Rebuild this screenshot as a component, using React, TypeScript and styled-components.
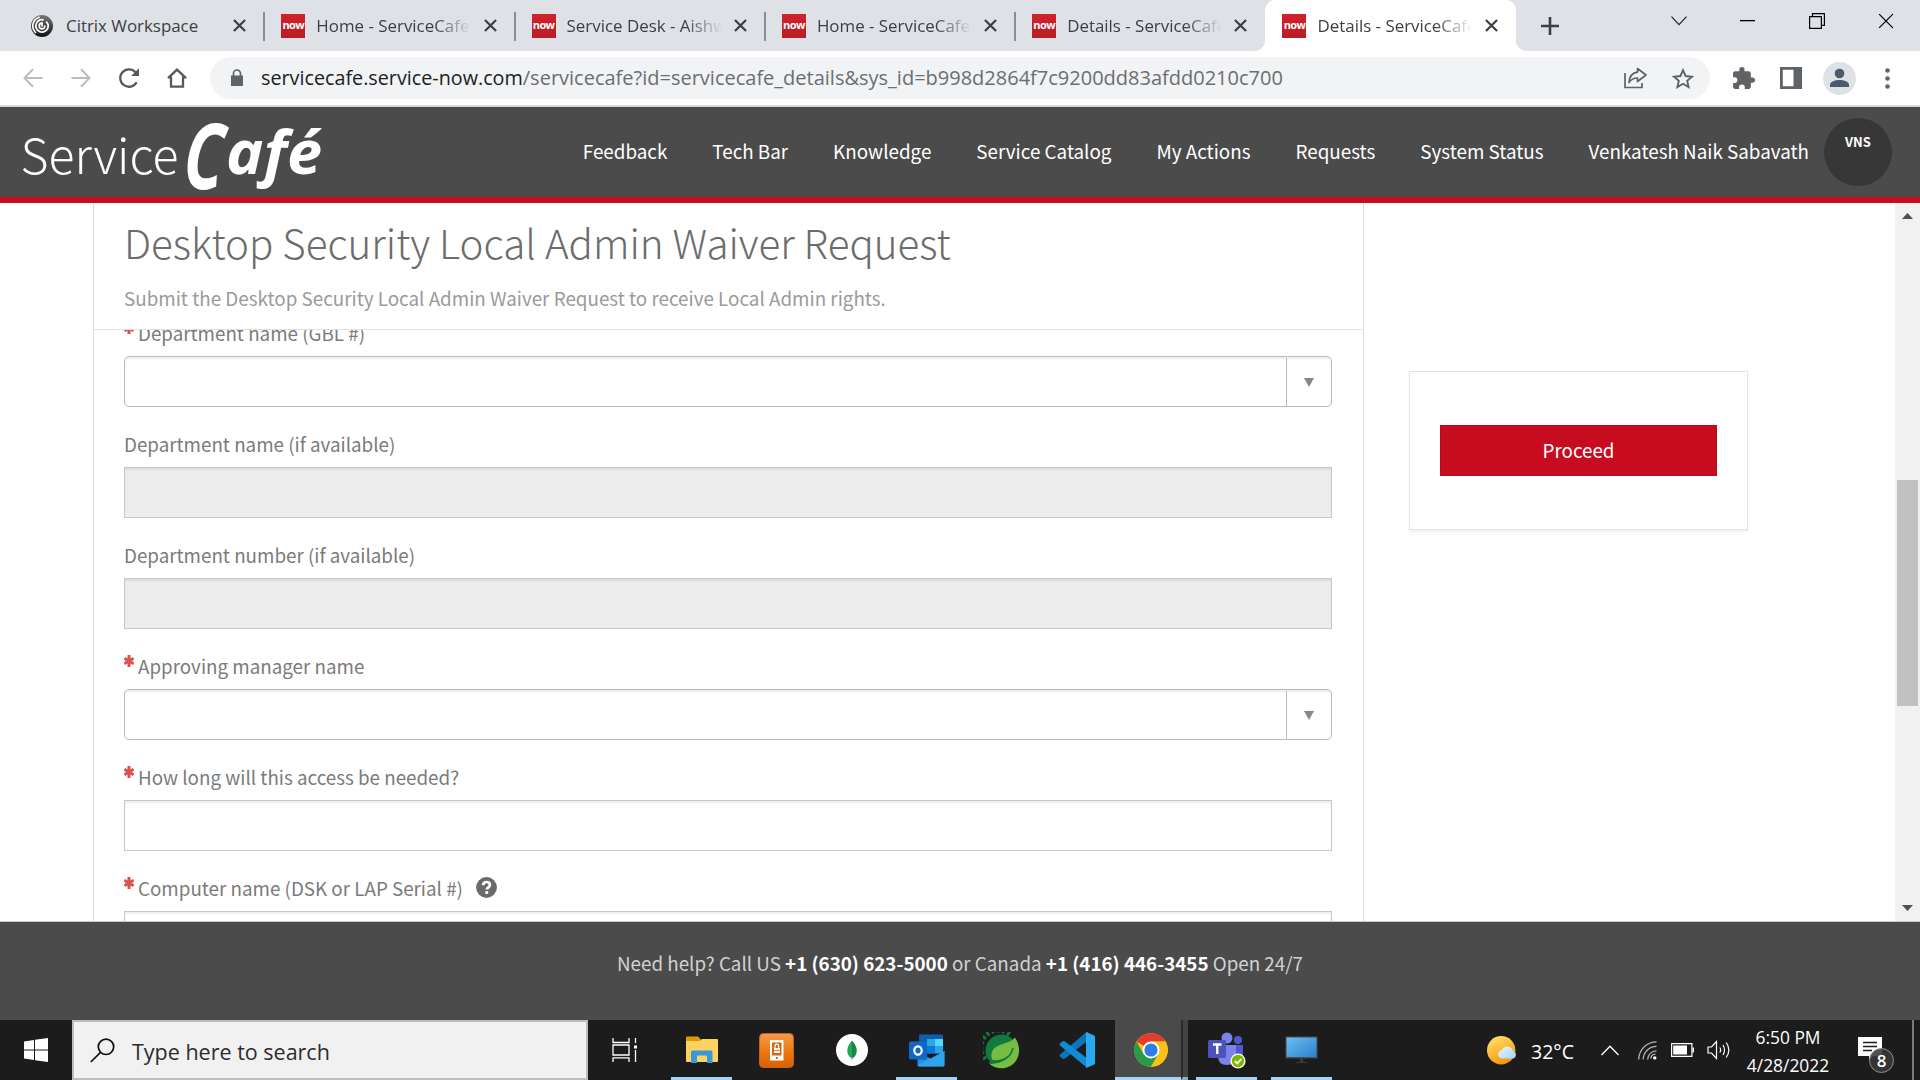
import React from 'react';
import styled, { createGlobalStyle, css } from 'styled-components';

const source = '"Noto Sans CJK SC", "Noto Sans", sans-serif';
const segoe = '"Open Sans", "Noto Sans", sans-serif';

const GlobalStyle = createGlobalStyle`
  * { box-sizing: border-box; }
  html, body { margin: 0; padding: 0; background: #fff; overflow: hidden; }
  svg { display: block; flex: none; }
`;

const Screen = styled.div`
  width: 1920px;
  height: 1080px;
  display: flex;
  flex-direction: column;
  overflow: hidden;
  background: #fff;
`;

/* ---------- browser chrome ---------- */

const TabStrip = styled.div`
  height: 51px;
  flex: none;
  display: flex;
  padding-left: 14px;
  background: #dee1e6;
  font-family: ${segoe};
`;

const TabBox = styled.div<{ $active?: boolean; $last?: boolean }>`
  width: 250.3px;
  height: 51px;
  display: flex;
  align-items: center;
  position: relative;
  padding: 0 18px 0 17px;
  gap: 11px;
  color: #3c4043;
  ${p => p.$active
    ? css`
        background: #fff;
        border-radius: 10px 10px 0 0;
        &::before, &::after {
          content: '';
          position: absolute;
          bottom: 0;
          width: 10px;
          height: 10px;
        }
        &::before { left: -10px; background: radial-gradient(circle at 0 0, #dee1e6 9.5px, #fff 10px); }
        &::after { right: -10px; background: radial-gradient(circle at 100% 0, #dee1e6 9.5px, #fff 10px); }
      `
    : !p.$last && css`
        &::after {
          content: '';
          position: absolute;
          right: -1px;
          top: 12px;
          width: 2px;
          height: 29px;
          background: #8c8e92;
        }
      `}
`;

const TabTitle = styled.div<{ $fade?: boolean }>`
  flex: 1;
  width: 0;
  overflow: hidden;
  white-space: nowrap;
  font-size: 16.9px;
  line-height: 50px;
  ${p => p.$fade && css`mask-image: linear-gradient(90deg, #000 118px, transparent 155px);`}
`;

const NowIcon = styled.div`
  width: 24px;
  height: 24px;
  flex: none;
  background: linear-gradient(#d0222c, #b81d26);
  color: #fff;
  font: 700 11px/21px ${segoe};
  letter-spacing: -0.6px;
  text-align: center;
  overflow: hidden;
`;

const NewTab = styled.div`
  width: 68px;
  display: flex;
  align-items: center;
  justify-content: center;
`;

const WindowButtons = styled.div`
  margin-left: auto;
  display: flex;
  height: 42px;
`;

const WindowButton = styled.div`
  width: 69px;
  display: flex;
  align-items: center;
  justify-content: center;
`;

const Toolbar = styled.div`
  height: 56px;
  flex: none;
  display: flex;
  align-items: center;
  padding-left: 9px;
  background: #fff;
  border-bottom: 2px solid #d8d8da;
`;

const Slot = styled.div`
  width: 48px;
  height: 42px;
  flex: none;
  display: flex;
  align-items: center;
  justify-content: center;
`;

const Omnibox = styled.div`
  width: 1500px;
  height: 42px;
  margin: 0 9px;
  padding: 0 3px 0 18px;
  display: flex;
  align-items: center;
  border-radius: 21px;
  background: #f1f3f4;
  font-family: ${segoe};
`;

const Url = styled.div`
  flex: 1;
  margin-left: 15px;
  font-size: 20px;
  line-height: 42px;
  color: #6b6e72;
  white-space: nowrap;
`;

const Domain = styled.span`
  color: #202124;
  font-size: 19.75px;
`;

const ProfileBadge = styled.div`
  width: 33px;
  height: 33px;
  border-radius: 50%;
  background: #dee1e6;
  display: flex;
  justify-content: center;
  align-items: center;
`;

/* ---------- portal header ---------- */

const Header = styled.header`
  height: 96px;
  flex: none;
  display: flex;
  align-items: center;
  justify-content: space-between;
  padding: 0 28px 0 16px;
  background: #4b4b4b;
  border-bottom: 6px solid #c90c20;
  font-family: ${source};
`;

const Nav = styled.nav`
  display: flex;
  align-items: center;
  gap: 45px;
`;

const NavLink = styled.a`
  color: #fff;
  font-size: 18.82px;
  line-height: 28px;
  padding-bottom: 3px;
  white-space: nowrap;
`;

const UserGroup = styled.div`
  display: flex;
  align-items: center;
  gap: 15px;
`;

const Avatar = styled.div`
  width: 68px;
  height: 68px;
  border-radius: 50%;
  background: #373737;
  color: #fff;
  font-size: 13px;
  font-weight: 700;
  line-height: 48px;
  text-align: center;
`;

/* ---------- page ---------- */

const Page = styled.main`
  height: 718px;
  flex: none;
  display: flex;
  overflow: hidden;
  font-family: ${source};
`;

const FormPanel = styled.section`
  width: 1271px;
  margin-left: 93px;
  border: solid #dcdedd;
  border-width: 0 1px;
  display: flex;
  flex-direction: column;
`;

const FormHeader = styled.div`
  height: 127px;
  flex: none;
  margin-right: 1px;
  padding: 14px 30px 0;
  border-bottom: 1px solid #dfe1e1;
`;

const Title = styled.h1`
  margin: 0;
  font-size: 40.35px;
  font-weight: 300;
  line-height: 50px;
  color: #6c6c6c;
  white-space: nowrap;
`;

const Subtitle = styled.p`
  margin: 17px 0 0;
  font-size: 18.82px;
  line-height: 28px;
  color: #9a9a9a;
  white-space: nowrap;
`;

const Fields = styled.div`
  flex: 1;
  min-height: 0;
  overflow: hidden;
  padding: 0 31px 0 30px;
`;

const FieldStack = styled.div`
  margin-top: -11px;
  display: flex;
  flex-direction: column;
  gap: 23px;
`;

const Label = styled.div`
  height: 28px;
  margin-bottom: 9px;
  display: flex;
  gap: 4px;
  font-size: 18.8px;
  line-height: 28px;
  color: #7b7b7b;
  white-space: nowrap;
`;

const Star = styled.svg`
  width: 10px;
  height: 12px;
  margin-top: 3px;
`;

const HelpIcon = styled.svg`
  width: 21px;
  height: 21px;
  margin: 3px 0 0 9px;
`;

const Input = styled.div<{ $kind: 'text' | 'select' | 'disabled' }>`
  height: 51px;
  display: flex;
  justify-content: flex-end;
  border: 1px solid ${p => (p.$kind === 'select' ? '#b9bbc0' : '#c8c8c8')};
  border-radius: ${p => (p.$kind === 'select' ? 5 : 0)}px;
  background: ${p => (p.$kind === 'disabled' ? '#ededed' : '#fff')};
  box-shadow: inset 0 2px 2px rgba(0, 0, 0, 0.07);
`;

const Dropdown = styled.div`
  width: 45px;
  margin-top: 1px;
  border-left: 1px solid #b9bbc0;
  display: flex;
  align-items: center;
  justify-content: center;
`;

const Side = styled.aside`
  flex: 1;
  padding: 168px 0 0 45px;
`;

const ActionCard = styled.div`
  width: 339px;
  height: 159px;
  padding: 53px 30px;
  border: 1px solid #e0e5e5;
  box-shadow: 0 2px 2px rgba(0, 0, 0, 0.05);
`;

const Proceed = styled.button`
  display: block;
  width: 277px;
  height: 51px;
  padding: 0 0 2px;
  border: 1px solid #b20c1d;
  background: #c80c20;
  color: #fff;
  font: 400 18.8px/47px ${source};
`;

const Scrollbar = styled.div`
  width: 25px;
  padding: 0 2px;
  background: #f1f1f1;
  display: flex;
  flex-direction: column;
  align-items: center;
`;

const ScrollArrow = styled.svg`
  width: 11px;
  height: 6px;
  margin: 10px 0;
`;

const Thumb = styled.div`
  width: 21px;
  height: 226px;
  margin-top: 251px;
  margin-bottom: auto;
  background: #c1c1c1;
`;

const Footer = styled.footer`
  height: 99px;
  flex: none;
  padding-top: 27px;
  border-top: 1px solid #c9c9c9;
  background: #4b4b4b;
  color: #d2d2d2;
  font: 400 18.8px/28px ${source};
  text-align: center;
  white-space: nowrap;
`;

const Phone = styled.b`
  color: #fff;
  font-weight: 700;
`;

/* ---------- taskbar ---------- */

const Taskbar = styled.div`
  height: 60px;
  flex: none;
  display: flex;
  background: #1c1c1c;
  font-family: ${segoe};
  color: #fff;
`;

const Start = styled.div`
  width: 72px;
  display: flex;
  align-items: center;
  justify-content: center;
`;

const Search = styled.div`
  width: 516px;
  height: 60px;
  margin-right: 1px;
  padding-left: 16px;
  display: flex;
  align-items: center;
  gap: 17px;
  border: 2px solid #bdbdbd;
  background: #f1f1f1;
  color: #2c2c2c;
  font-size: 21.5px;
  line-height: 50px;
`;

const SearchHint = styled.span`
  padding-top: 3px;
`;

const AppSlot = styled.div<{ $open?: boolean; $active?: boolean }>`
  width: ${p => (p.$active ? 66 : 61)}px;
  margin: 0 ${p => (p.$active ? 0 : 7)}px 0 ${p => (p.$active ? 1 : 7)}px;
  height: 60px;
  display: flex;
  align-items: center;
  justify-content: center;
  background: ${p => (p.$active ? '#4a4a4a' : 'transparent')};
  border-bottom: 3px solid ${p => (p.$open ? '#a3d3fb' : 'transparent')};
  padding: 3px 0 0 ${p => (p.$active ? 5 : 0)}px;
`;

const TaskViewIcon = styled.svg`
  margin-right: 3px;
`;

const StackEdge = styled.div`
  width: 7px;
  height: 60px;
  border-left: 2px solid #2b2b2b;
  border-bottom: 3px solid #86afd0;
  background: #434343;
  margin-right: 1px;
`;

const Tray = styled.div`
  margin-left: auto;
  display: flex;
  align-items: center;
`;

const Temperature = styled.div`
  width: 46px;
  margin-left: 13px;
  padding-top: 3px;
  font-size: 19.5px;
  line-height: 57px;
`;

const TrayIcon = styled.div<{ $w: number; $ml: number }>`
  width: ${p => p.$w}px;
  margin-left: ${p => p.$ml}px;
`;

const Clock = styled.div`
  width: 100px;
  margin-left: 7px;
  padding-top: 2px;
  text-align: center;
  white-space: nowrap;
  font-size: 17.4px;
  line-height: 28px;
`;

const Notifications = styled.div`
  width: 37px;
  height: 37px;
  margin: 11px 0 0 20px;
  position: relative;
`;

const Count = styled.div`
  position: absolute;
  left: 11px;
  top: 11px;
  width: 25px;
  height: 25px;
  border: 1px solid #8e8e8e;
  border-radius: 50%;
  background: rgba(56, 56, 56, 0.88);
  text-align: center;
  font: 600 17px/23px ${segoe};
`;

const ShowDesktop = styled.div`
  width: 8px;
  height: 60px;
  margin-left: 17px;
  border-left: 2px solid #7a7a7a;
`;

/* ---------- drawings ---------- */

const Cross = ({ size = 13, width = 2.4, color = '#3c4043' }) => (
  <svg width={size} height={size} viewBox="0 0 14 14" fill="none" stroke={color} strokeWidth={width}>
    <path d="M1 1L13 13M13 1L1 13" />
  </svg>
);

const CitrixIcon = () => (
  <svg width="24" height="24" viewBox="1 0 24 24" fill="none" stroke="#fff" strokeWidth="1.7" strokeLinecap="round">
    <defs>
      <linearGradient id="cx" x1="0" y1="0" x2="0" y2="1">
        <stop offset="0" stopColor="#777" />
        <stop offset="1" stopColor="#111" />
      </linearGradient>
    </defs>
    <circle cx="12" cy="12" r="11" fill="url(#cx)" stroke="none" />
    <path d="M12 9.200a2.800 2.800 0 1 0 2.800 2.800" />
    <path d="M13 5.800a6.200 6.200 0 1 0 5.200 6.200M18.200 12c0-1.500-.5-2.800-1.600-3.900" />
    <path d="M9 3.300a9.200 9.200 0 0 0-3.500 15.200" />
    <path d="M12 12V9" />
  </svg>
);

const Logo = () => (
  <svg width="316" height="86" viewBox="16 109 316 86" fill="#fff">
    <text x="20.500" y="174" fontFamily='"Noto Sans CJK SC", sans-serif' fontWeight="200" fontSize="48.500" textLength="158" lengthAdjust="spacingAndGlyphs">Service</text>
    <g fontFamily='"Open Sans", sans-serif' fontWeight="700" fontStyle="italic">
      <text transform="translate(182 189) skewX(-4) scale(.72 1)" fontSize="91">C</text>
      <text x="226" y="174" fontSize="60" textLength="96" lengthAdjust="spacingAndGlyphs">afé</text>
    </g>
  </svg>
);

const MonitorIcon = () => (
  <svg width="33" height="28" viewBox="0 0 33 28">
    <defs>
      <linearGradient id="mon" x1="0" y1="0" x2="1" y2="1">
        <stop offset="0" stopColor="#6dbdf0" />
        <stop offset="1" stopColor="#2a82cc" />
      </linearGradient>
    </defs>
    <path d="M.5.5h32v22H.5z" fill="#4b4b4b" />
    <path d="M1.500 1.500h30v19.500h-30z" fill="url(#mon)" />
    <path d="M15 22.500h3v3.500h4v1H11v-1h4z" fill="#3a3a3a" />
  </svg>
);

const ChromeIcon = () => (
  <svg width="34" height="34" viewBox="0 0 34 34">
    <circle cx="17" cy="17" r="16.800" fill="#fbc116" />
    <path d="M17 17L2.450 8.600A16.800 16.800 0 0 1 31.550 8.600H17z" fill="#e33b2e" />
    <path d="M2.450 8.600A16.800 16.800 0 0 0 17 33.800L24.300 21.200 9.700 21.200z" fill="#2b9a48" />
    <path d="M17 8.600h14.550A16.800 16.800 0 0 1 17 33.800L24.300 21.200z" fill="#fbc116" />
    <circle cx="17" cy="17" r="8.400" fill="#fff" />
    <circle cx="17" cy="17" r="6.600" fill="#2f7bea" />
  </svg>
);

const ExplorerIcon = () => (
  <svg width="32" height="28" viewBox="0 0 32 28">
    <path d="M0 1.500Q0 .5 1 .5H12l3 3V6H0z" fill="#dd9b06" />
    <path d="M0 5H14l2-2H31Q32 3 32 4V25Q32 26 31 26H1Q0 26 0 25z" fill="#fdd35f" />
    <path d="M5 16q0-1.500 1.500-1.500h18.500q1.500 0 1.500 1.500V27h-5.500v-7.500h-10V27H5z" fill="#3a96dd" />
  </svg>
);

const LockPhoneIcon = () => (
  <svg width="35" height="35" viewBox="0 0 35 35">
    <defs>
      <linearGradient id="org" x1="0" y1="0" x2="0" y2="1">
        <stop offset="0" stopColor="#f39a4e" />
        <stop offset=".5" stopColor="#ee7a12" />
        <stop offset="1" stopColor="#d95f04" />
      </linearGradient>
    </defs>
    <rect x=".5" y=".5" width="34" height="34" rx="4" fill="url(#org)" stroke="#c9621a" />
    <path d="M11 7h13.500v20.500H11z" fill="#fff" />
    <path d="M13 9.500h9.500v13H13z" fill="#d9650d" />
    <path d="M15 15h6v5h-6z" fill="#fff" />
    <path d="M16 15.500v-2.500a1.800 1.800 0 0 1 3.600 0v2.500" fill="none" stroke="#fff" strokeWidth="1.200" />
    <path d="M15 17.500h6" stroke="#d9650d" strokeWidth=".8" />
    <circle cx="17.800" cy="25" r="1.100" fill="#c8402a" />
  </svg>
);

const MongoIcon = () => (
  <svg width="32" height="32" viewBox="0 0 32 32">
    <circle cx="16" cy="16" r="16" fill="#fff" />
    <path d="M16 6.500C12 11 10.500 15 11.500 19c.8 3 2.700 4.500 4.500 5.500z" fill="#1fa956" />
    <path d="M16 6.500c4 4.500 5.500 8.500 4.500 12.500-.8 3-2.700 4.500-4.500 5.500z" fill="#128a43" />
    <path d="M15.600 23h.8v3.500h-.8z" fill="#8a9a90" />
  </svg>
);

const OutlookIcon = () => (
  <svg width="36" height="33" viewBox="0 0 36 33">
    <path d="M10 1.500Q10 .5 11 .5H33Q34 .5 34 1.500V20H10z" fill="#0f5ead" />
    <path d="M18 5h8v7h-8z" fill="#28a8ea" />
    <path d="M26 5h8v7h-8z" fill="#50d9ff" />
    <path d="M18 12h8v7h-8z" fill="#0d78d1" />
    <path d="M26 12h8v7h-8z" fill="#2aa6ea" />
    <path d="M8.500 17L22 25 35.500 17V31Q35.500 32.500 34 32.500H10Q8.500 32.500 8.500 31z" fill="#1f8ee6" />
    <path d="M8.500 31L35.500 17V31Q35.500 32.500 34 32.500H10z" fill="#37b0f3" opacity=".65" />
    <rect y="7.500" width="18" height="18" rx="1.500" fill="#1068c4" />
    <ellipse cx="9" cy="16.500" rx="3.700" ry="4.100" fill="none" stroke="#fff" strokeWidth="2.200" />
  </svg>
);

const SpringIcon = () => (
  <svg width="37" height="37" viewBox="0 0 37 37">
    <circle cx="18.500" cy="18.500" r="16" fill="#12793f" />
    <path d="M2.500 27A17 17 0 0 1 28 4" fill="none" stroke="#12793f" strokeWidth="4.500" strokeDasharray="2.800 2.600" />
    <path d="M32 5.500C26 13 12 11 9 20c-1.500 4.500 0 7 .5 8C20 29 27 24 29.500 17.500 27 26 19 32 6 31.500 11 36 17 36.800 22 36 32 34 36.500 25 36 17 35.600 12 34 9 32 5.500z" fill="#77bc43" />
    <path d="M6 31C20 31 28 25 30 16" fill="none" stroke="#12793f" strokeWidth="1.600" />
  </svg>
);

const CodeIcon = () => (
  <svg width="36" height="36" viewBox="0 0 36 36">
    <path d="M1 24.500L4 27Q5 27.300 6 26.600L29 8.500V0L26.500.7 1 22.500Q0 23.500 1 24.500z" fill="#0b73b8" />
    <path d="M1 11.500L4 9Q5 8.700 6 9.400L27 25.600V35L1 13.500Q0 12.500 1 11.500z" fill="#118bd3" />
    <path d="M27 0L34.800 3.300Q36 4 36 5V31Q36 32 34.800 32.700L27 36z" fill="#29a9f0" />
  </svg>
);

const TeamsIcon = () => (
  <svg width="38" height="37" viewBox="0 0 38 37">
    <circle cx="19" cy="6" r="5.500" fill="#7b83eb" />
    <circle cx="30" cy="8" r="4" fill="#5059c9" />
    <path d="M24 13H35V22Q35 28 29 28H24z" fill="#5059c9" />
    <path d="M10 13H28V24Q28 33 19 33T10 24z" fill="#7b83eb" />
    <rect y="8" width="18" height="18" rx="1.500" fill="#4b53bc" />
    <path d="M5 12.500h8.500M9.250 12.500v9.500" stroke="#fff" strokeWidth="2.400" />
    <circle cx="30" cy="29" r="7.600" fill="#fff" />
    <circle cx="30" cy="29" r="6.200" fill="#7db700" />
    <path d="M26.800 29l2.400 2.400 4.200-4.600" fill="none" stroke="#fff" strokeWidth="1.800" />
  </svg>
);

const WeatherIcon = () => (
  <svg width="31" height="29" viewBox="0 0 31 29">
    <defs>
      <linearGradient id="sun" x1=".2" y1="0" x2=".7" y2="1">
        <stop offset="0" stopColor="#ffe26a" />
        <stop offset="1" stopColor="#f98f06" />
      </linearGradient>
      <linearGradient id="cloud" x1="0" y1="0" x2="1" y2="1">
        <stop offset="0" stopColor="#f0f8ff" />
        <stop offset="1" stopColor="#9fd1fb" />
      </linearGradient>
    </defs>
    <circle cx="14.200" cy="14.200" r="14.200" fill="url(#sun)" />
    <path d="M15 22.500a4.200 4.200 0 0 1-.3-8.300 6 6 0 0 1 11.400 1 3.800 3.800 0 0 1 .1 7.300z" fill="url(#cloud)" />
  </svg>
);

/* ---------- content ---------- */

const tabs = ['Home - ServiceCafe', 'Service Desk - Aishwarya', 'Home - ServiceCafe', 'Details - ServiceCafe', 'Details - ServiceCafe'];

const navItems = ['Feedback', 'Tech Bar', 'Knowledge', 'Service Catalog', 'My Actions', 'Requests', 'System Status'];

type Field = { label: string; kind: 'text' | 'select' | 'disabled'; required?: boolean; help?: boolean };

const fields: Field[] = [
  { label: 'Department name (GBL #)', kind: 'select', required: true },
  { label: 'Department name (if available)', kind: 'disabled' },
  { label: 'Department number (if available)', kind: 'disabled' },
  { label: 'Approving manager name', kind: 'select', required: true },
  { label: 'How long will this access be needed?', kind: 'text', required: true },
  { label: 'Computer name (DSK or LAP Serial #)', kind: 'text', required: true, help: true },
];

const FormField = ({ label, kind, required, help }: Field) => (
  <div>
    <Label>
      {required && (
        <Star viewBox="0 0 10 12" stroke="#d9534f" strokeWidth="3">
          <path d="M5 0V12M.4 3.200L9.600 8.800M9.600 3.200L.4 8.800" />
        </Star>
      )}
      {label}
      {help && (
        <HelpIcon viewBox="0 0 21 21">
          <circle cx="10.500" cy="10.500" r="10.400" fill="#6a6a6a" />
          <path d="M7.200 8.200C7.200 6 8.600 5 10.500 5s3.400 1.100 3.400 2.900c0 2.400-3.100 2.400-3.100 4.700" fill="none" stroke="#fff" strokeWidth="2.700" />
          <path d="M9.300 14.200h2.900v2.700H9.300z" fill="#fff" />
        </HelpIcon>
      )}
    </Label>
    <Input $kind={kind}>
      {kind === 'select' && (
        <Dropdown>
          <svg width="10" height="9" viewBox="0 0 10 9"><path d="M0 0H10L5 9z" fill="#888" /></svg>
        </Dropdown>
      )}
    </Input>
  </div>
);

const BrowserTabs = () => (
  <TabStrip>
    <TabBox>
      <CitrixIcon />
      <TabTitle>Citrix Workspace</TabTitle>
      <Cross />
    </TabBox>
    {tabs.map((title, i) => (
      <TabBox key={i} $active={i === 4} $last={i === 3}>
        <NowIcon>now</NowIcon>
        <TabTitle $fade>{title}</TabTitle>
        <Cross />
      </TabBox>
    ))}
    <NewTab>
      <svg width="18" height="18" viewBox="0 0 18 18" stroke="#3c4043" strokeWidth="2.600"><path d="M9 0V18M0 9H18" /></svg>
    </NewTab>
    <WindowButtons>
      <WindowButton>
        <svg width="16" height="10" viewBox="0 0 16 10" fill="none" stroke="#222" strokeWidth="1.200"><path d="M.5.7L8 8.700 15.500.7" /></svg>
      </WindowButton>
      <WindowButton>
        <svg width="15" height="2"><path d="M0 0H15V1.300H0z" fill="#000" /></svg>
      </WindowButton>
      <WindowButton>
        <svg width="16" height="16" viewBox="0 0 16 16" fill="none" stroke="#000" strokeWidth="1.200"><path d="M.6 3.600H12.400V15.400H.6zM3.500 3.500V.6H15.400V12.400H12.500" /></svg>
      </WindowButton>
      <WindowButton><Cross size={16} width={1.1} color="#000" /></WindowButton>
    </WindowButtons>
  </TabStrip>
);

const BrowserToolbar = () => (
  <Toolbar>
    <Slot><svg width="20" height="20" viewBox="0 0 20 20" fill="none" stroke="#babcbe" strokeWidth="2"><path d="M19.500 10H1.500M10 1.200L1.500 10 10 18.800" /></svg></Slot>
    <Slot><svg width="20" height="20" viewBox="0 0 20 20" fill="none" stroke="#babcbe" strokeWidth="2"><path d="M.5 10H18.500M10 1.200L18.500 10 10 18.800" /></svg></Slot>
    <Slot>
      <svg width="22" height="22" viewBox="0 0 22 22"><path d="M18.600 15.200A8.700 8.700 0 1 1 17.400 5.200" fill="none" stroke="#55585d" strokeWidth="2.300" /><path d="M21 1.200V9H13.200z" fill="#55585d" /></svg>
    </Slot>
    <Slot>
      <svg width="20" height="20" viewBox="0 0 20 20" fill="none" stroke="#55585d" strokeWidth="2.300"><path d="M1 10.200L10 1.600 19 10.200M4 8.500V18.700H16V8.500" /></svg>
    </Slot>
    <Omnibox>
      <svg width="18" height="18" viewBox="0 0 18 18"><path d="M3 6.500H15V17H3z" fill="#5f6368" /><path d="M5.500 7V4.500a3.500 3.500 0 0 1 7 0V7" fill="none" stroke="#5f6368" strokeWidth="1.700" /></svg>
      <Url><Domain>servicecafe.service-now.com</Domain>/servicecafe?id=servicecafe_details&amp;sys_id=b998d2864f7c9200dd83afdd0210c700</Url>
      <Slot>
        <svg width="23" height="22" viewBox="0 0 23 22" fill="none" stroke="#5f6368" strokeWidth="1.700"><path d="M1 6V20.500H18V16" /><path d="M13.500 1.500L22 8 13.500 14.500V11C9.500 11 7 12.500 5 15.500 5.500 10 8.500 5.800 13.500 5.200z" strokeLinejoin="round" /></svg>
      </Slot>
      <Slot>
        <svg width="22" height="21" viewBox="0 0 22 21" fill="none" stroke="#5f6368" strokeWidth="1.900"><path d="M11 2.200L13.600 8 20 8.700 15.200 12.900 16.600 19.100 11 15.800 5.400 19.100 6.800 12.900 2 8.700 8.400 8z" /></svg>
      </Slot>
    </Omnibox>
    <Slot>
      <svg width="23" height="23" viewBox="1 1 22 22"><path fill="#5f6368" d="M20.500 11H19V7c0-1.100-.9-2-2-2h-4V3.500a2.500 2.500 0 0 0-5 0V5H4c-1.100 0-2 .9-2 2v3.800h1.500a2.700 2.700 0 0 1 0 5.400H2V20c0 1.100.9 2 2 2h3.800v-1.500a2.700 2.700 0 0 1 5.400 0V22H17c1.100 0 2-.9 2-2v-4h1.500a2.500 2.500 0 0 0 0-5z" /></svg>
    </Slot>
    <Slot>
      <svg width="22" height="22" viewBox="0 0 22 22"><path d="M0 0H22V22H0zM2.800 2.800V19.200H13.500V2.800z" fill="#5f6368" fillRule="evenodd" /></svg>
    </Slot>
    <Slot>
      <ProfileBadge>
        <svg width="19" height="20" viewBox="0 0 19 20" fill="#4c5a70"><circle cx="9.500" cy="5.500" r="4.800" /><path d="M0 19V17C0 13.500 5 12 9.500 12S19 13.500 19 17V19z" /></svg>
      </ProfileBadge>
    </Slot>
    <Slot>
      <svg width="5" height="21" viewBox="0 0 5 21" fill="#5f6368"><circle cx="2.500" cy="2.500" r="2.300" /><circle cx="2.500" cy="10.500" r="2.300" /><circle cx="2.500" cy="18.500" r="2.300" /></svg>
    </Slot>
  </Toolbar>
);

const SystemTray = () => (
  <Tray>
    <WeatherIcon />
    <Temperature>32°C</Temperature>
    <TrayIcon $w={18} $ml={24}>
      <svg width="18" height="11" viewBox="0 0 18 11" fill="none" stroke="#fff" strokeWidth="1.300"><path d="M.5 10L9 1.200 17.500 10" /></svg>
    </TrayIcon>
    <TrayIcon $w={20} $ml={19}>
      <svg width="19" height="19" viewBox="0 0 19 19" fill="none" stroke="#ddd" strokeWidth="1.200">
        <path d="M.7 18.500A18 18 0 0 1 18.500.8M5.200 18.500A13.300 13.300 0 0 1 18.500 5.400M9.600 18.500A9 9 0 0 1 18.500 9.800" opacity=".8" />
        <path d="M12.800 17.500A5 5 0 0 1 17.500 13" />
        <circle cx="16.800" cy="16.900" r="1.700" fill="#fff" stroke="none" />
      </svg>
    </TrayIcon>
    <TrayIcon $w={23} $ml={13}>
      <svg width="23" height="14" viewBox="0 0 23 14" fill="#fff"><path d="M0 0H21.500V14H0zM1.200 1.200V12.800H20.300V1.200z" fillRule="evenodd" /><path d="M2.200 2.400H16V11.600H2.200zM21.500 4.500H23V9.500H21.500z" /></svg>
    </TrayIcon>
    <TrayIcon $w={24} $ml={13}>
      <svg width="24" height="20" viewBox="0 0 24 20" fill="none" stroke="#fff" strokeWidth="1.200">
        <path d="M1 7H4.500L9.500 1.500V18.500L4.500 13H1z" />
        <path d="M12.800 7.500Q14.500 10 12.800 12.500M16 5Q19 10 16 15M19.200 2.500Q24.500 10 19.200 17.500" />
      </svg>
    </TrayIcon>
    <Clock>
      <div>6:50 PM</div>
      <div>4/28/2022</div>
    </Clock>
    <Notifications>
      <svg width="24" height="24" viewBox="0 0 24 24"><path d="M0 0H24V19H15L11 23.500V19H0z" fill="#fff" /><path d="M5 5.500H19M5 9.500H19M5 13.500H14" stroke="#1c1c1c" strokeWidth="1.300" /></svg>
      <Count>8</Count>
    </Notifications>
    <ShowDesktop />
  </Tray>
);

export default function App() {
  return (
    <Screen>
      <GlobalStyle />
      <BrowserTabs />
      <BrowserToolbar />
      <Header>
        <Logo />
        <Nav>
          {navItems.map(item => <NavLink key={item}>{item}</NavLink>)}
          <UserGroup>
            <NavLink>Venkatesh Naik Sabavath</NavLink>
            <Avatar>VNS</Avatar>
          </UserGroup>
        </Nav>
      </Header>
      <Page>
        <FormPanel>
          <FormHeader>
            <Title>Desktop Security Local Admin Waiver Request</Title>
            <Subtitle>Submit the Desktop Security Local Admin Waiver Request to receive Local Admin rights.</Subtitle>
          </FormHeader>
          <Fields>
            <FieldStack>
              {fields.map(field => <FormField key={field.label} {...field} />)}
            </FieldStack>
          </Fields>
        </FormPanel>
        <Side>
          <ActionCard>
            <Proceed>Proceed</Proceed>
          </ActionCard>
        </Side>
        <Scrollbar>
          <ScrollArrow viewBox="0 0 11 6"><path d="M5.500 0L11 6H0z" fill="#505050" /></ScrollArrow>
          <Thumb />
          <ScrollArrow viewBox="0 0 11 6"><path d="M5.500 6L11 0H0z" fill="#505050" /></ScrollArrow>
        </Scrollbar>
      </Page>
      <Footer>
        Need help? Call US <Phone>+1 (630) 623-5000</Phone> or Canada <Phone>+1 (416) 446-3455</Phone> Open 24/7
      </Footer>
      <Taskbar>
        <Start>
          <svg width="24" height="24" viewBox="0 0 24 24" fill="#fff"><path d="M0 3.400L10 2V11.500H0zM11 1.800L24 0V11.500H11zM0 12.500H10V22L0 20.600zM11 12.500H24V24L11 22.200z" /></svg>
        </Start>
        <Search>
          <svg width="25" height="25" viewBox="0 0 25 25" fill="none" stroke="#111" strokeWidth="1.700"><circle cx="16" cy="8.800" r="7.700" /><path d="M10.500 14.300L.8 24" /></svg>
          <SearchHint>Type here to search</SearchHint>
        </Search>
        <AppSlot>
          <TaskViewIcon width="26" height="24" viewBox="0 0 26 24" fill="none" stroke="#fff" strokeWidth="1.300"><path d="M1 0V4.500H17V0M1 7H17V17H1zM1 24V19.800H17V24M23.500 0V5M23.500 12V24" /><path d="M22 7.500H25V10.500H22z" fill="#fff" stroke="none" /></TaskViewIcon>
        </AppSlot>
        <AppSlot $open><ExplorerIcon /></AppSlot>
        <AppSlot><LockPhoneIcon /></AppSlot>
        <AppSlot><MongoIcon /></AppSlot>
        <AppSlot $open><OutlookIcon /></AppSlot>
        <AppSlot><SpringIcon /></AppSlot>
        <AppSlot><CodeIcon /></AppSlot>
        <AppSlot $open $active><ChromeIcon /></AppSlot>
        <StackEdge />
        <AppSlot $open><TeamsIcon /></AppSlot>
        <AppSlot $open><MonitorIcon /></AppSlot>
        <SystemTray />
      </Taskbar>
    </Screen>
  );
}
